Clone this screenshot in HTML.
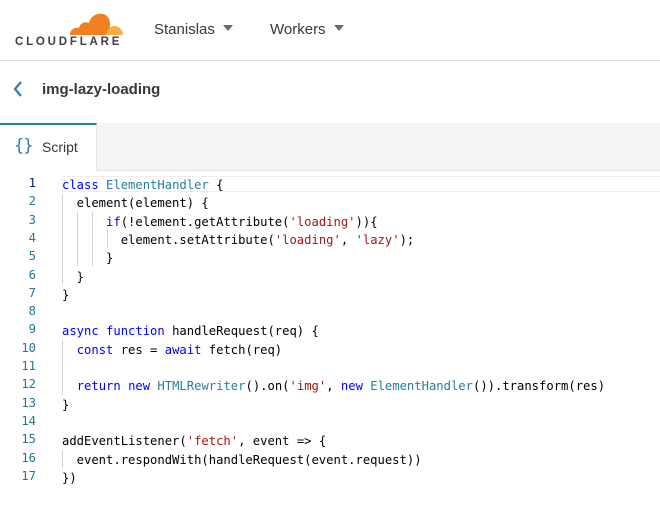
<!DOCTYPE html>
<html><head><style>
body{margin:0;width:660px;height:523px;background:#fff;font-family:"Liberation Sans",sans-serif;position:relative;overflow:hidden}
.hdr{position:absolute;left:0;top:0;width:660px;height:60px;border-bottom:1px solid #e2e2e2}
.nav{position:absolute;top:21px;font-size:15px;color:#36393a}
.caret{display:inline-block;width:0;height:0;border-left:5px solid transparent;border-right:5px solid transparent;border-top:6px solid #6b6b6b;margin-left:8px;vertical-align:3px}
.title{position:absolute;left:42px;top:81px;font-size:15px;font-weight:bold;color:#36393a}
.tabbar{position:absolute;left:0;top:123px;width:660px;height:47px;background:#f5f5f5;border-bottom:1px solid #e5e5e5}
.tab{position:absolute;left:0;top:0;width:97px;height:48px;background:#fff;border-top:2px solid #2c7cb0;border-right:1px solid #e5e5e5;box-sizing:border-box}
.code{position:absolute;left:0;top:176px;font-family:"DejaVu Sans Mono",monospace;font-size:12.2px;color:#000}
.ln{position:absolute;left:0;width:36px;text-align:right;color:#237893}
.l{position:absolute;left:62px;white-space:pre;height:18.3px;line-height:18.3px}
.k{color:#0000ff}.t{color:#267f99}.s{color:#a31515}
.g{position:absolute;border-left:1px solid #d3d3d3;width:0}
</style></head><body>
<div class="hdr">
<svg style="position:absolute;left:69px;top:10px" width="54" height="26" viewBox="0 0 54 26"><path d="M1 25 C1 20 5 17 10 18 C11 13 16 11 20 13 C22 3 36 0 40 9 C42 13 41 20 38 25 Z" fill="#f38020"/><path d="M37 25 C38 20 41 16 45 16 C50 16 54 20 54 25 Z" fill="#faae40"/></svg>
<div style="position:absolute;left:15px;top:36px;font-size:11.5px;font-weight:bold;letter-spacing:2.8px;color:#404041">CLOUDFLARE</div>
<div class="nav" style="left:154px">Stanislas<span class="caret"></span></div>
<div class="nav" style="left:270px">Workers<span class="caret"></span></div>
</div>
<svg style="position:absolute;left:13px;top:81px" width="10" height="16" viewBox="0 0 10 16"><path d="M8 1 L2 8 L8 15" stroke="#2c7cb0" stroke-width="2.2" fill="none"/></svg>
<div class="title">img-lazy-loading</div>
<div class="tabbar"><div class="tab">
<span style="position:absolute;left:14px;top:11px;font-size:17px;color:#2c7cb0;font-family:'DejaVu Sans Mono',monospace;letter-spacing:-1px">{}</span>
<span style="position:absolute;left:42px;top:14px;font-size:14px;color:#36393a">Script</span>
</div></div>
<div style="position:absolute;left:62px;top:176px;width:600px;height:16px;border:1px solid #eee;box-sizing:border-box"></div>
<div class="g" style="left:62px;top:194px;height:90px"></div>
<div class="g" style="left:77px;top:212px;height:54px"></div>
<div class="g" style="left:92px;top:212px;height:54px"></div>
<div class="g" style="left:107px;top:230px;height:18px"></div>
<div class="g" style="left:62px;top:340px;height:55px"></div>
<div class="g" style="left:62px;top:450px;height:18px"></div>
<div class="code">
<div class="ln" style="top:0;color:#0b216f">1</div><div class="l" style="top:0"><span class="k">class</span> <span class="t">ElementHandler</span> {</div>
<div class="ln" style="top:18.3px">2</div><div class="l" style="top:18.3px">  element(element) {</div>
<div class="ln" style="top:36.6px">3</div><div class="l" style="top:36.6px">      <span class="k">if</span>(!element.getAttribute(<span class="s">'loading'</span>)){</div>
<div class="ln" style="top:54.9px">4</div><div class="l" style="top:54.9px">        element.setAttribute(<span class="s">'loading'</span>, <span class="s">'lazy'</span>);</div>
<div class="ln" style="top:73.2px">5</div><div class="l" style="top:73.2px">      }</div>
<div class="ln" style="top:91.5px">6</div><div class="l" style="top:91.5px">  }</div>
<div class="ln" style="top:109.8px">7</div><div class="l" style="top:109.8px">}</div>
<div class="ln" style="top:128.1px">8</div>
<div class="ln" style="top:146.4px">9</div><div class="l" style="top:146.4px"><span class="k">async</span> <span class="k">function</span> handleRequest(req) {</div>
<div class="ln" style="top:164.7px">10</div><div class="l" style="top:164.7px">  <span class="k">const</span> res = <span class="k">await</span> fetch(req)</div>
<div class="ln" style="top:183px">11</div>
<div class="ln" style="top:201.3px">12</div><div class="l" style="top:201.3px">  <span class="k">return</span> <span class="k">new</span> <span class="t">HTMLRewriter</span>().on(<span class="s">'img'</span>, <span class="k">new</span> <span class="t">ElementHandler</span>()).transform(res)</div>
<div class="ln" style="top:219.6px">13</div><div class="l" style="top:219.6px">}</div>
<div class="ln" style="top:237.9px">14</div>
<div class="ln" style="top:256.2px">15</div><div class="l" style="top:256.2px">addEventListener(<span class="s">'fetch'</span>, event =&gt; {</div>
<div class="ln" style="top:274.5px">16</div><div class="l" style="top:274.5px">  event.respondWith(handleRequest(event.request))</div>
<div class="ln" style="top:292.8px">17</div><div class="l" style="top:292.8px">})</div>
</div>
</body></html>
